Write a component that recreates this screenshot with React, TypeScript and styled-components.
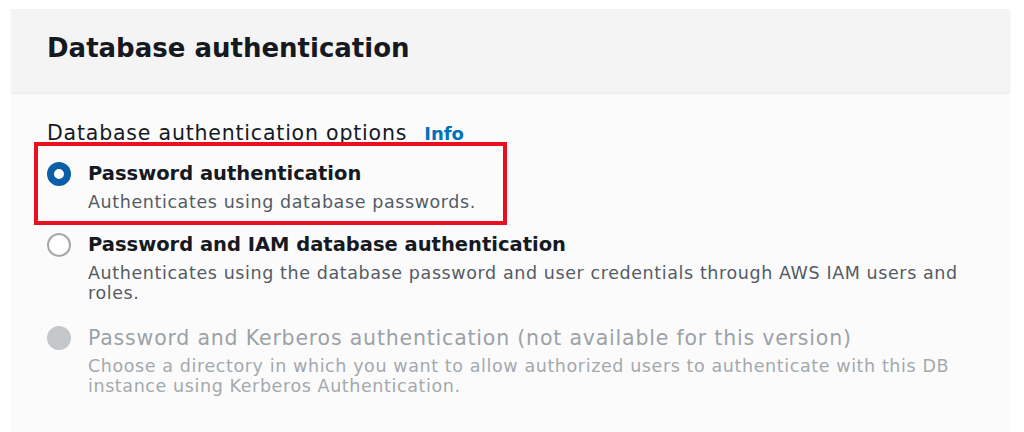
import React from "react";
import styled, { createGlobalStyle } from "styled-components";

const Global = createGlobalStyle`
  html, body { margin: 0; padding: 0; background: #ffffff; }
  body { font-family: "DejaVu Sans", "Liberation Sans", sans-serif; }
`;

const Page = styled.div`
  padding: 9px 14px 0 11px;
  height: 432px;
  box-sizing: border-box;
  overflow: hidden;
`;

const Panel = styled.section`
  background: #fbfbfb;
  height: 100%;
  display: flex;
  flex-direction: column;
`;

const Header = styled.header`
  height: 84px;
  box-sizing: border-box;
  background: #f4f4f4;
  border-bottom: 1px solid #ececec;
  box-shadow: 0 1px 2px rgba(0, 0, 0, 0.05);
  padding: 21px 0 0 36px;
`;

const Title = styled.h2`
  margin: 0;
  font-size: 26px;
  line-height: 36px;
  font-weight: 700;
  color: #16191f;
`;

const Body = styled.div`
  padding: 30px 0 0 36px;
  display: flex;
  flex-direction: column;
`;

const Label = styled.div`
  font-size: 20.5px;
  letter-spacing: 0.8px;
  color: #16191f;
  display: flex;
  align-items: baseline;
  gap: 17px;
  line-height: 20px;
`;

const Info = styled.span`
  font-size: 18px;
  letter-spacing: 0;
  font-weight: 700;
  color: #0073bb;
`;

const Options = styled.div`
  display: flex;
  flex-direction: column;
  gap: 7px;
  margin-left: -13px;
  margin-top: -2px;
`;

const Option = styled.div<{ $highlight?: boolean }>`
  display: flex;
  gap: 17px;
  padding: ${(p) => (p.$highlight ? "15px 27px 8px 9px" : "0 35px 14px 13px")};
  border: ${(p) => (p.$highlight ? "4px solid #e8101e" : "none")};
  align-self: ${(p) => (p.$highlight ? "flex-start" : "stretch")};
`;

const Radio = styled.span<{ $state: "checked" | "unchecked" | "disabled" }>`
  flex: none;
  width: 24px;
  height: 24px;
  border-radius: 50%;
  box-sizing: border-box;
  margin-top: 1px;
  ${(p) =>
    p.$state === "checked"
      ? "border: 7.5px solid #0b5fa8; background: #fff;"
      : p.$state === "unchecked"
      ? "border: 2px solid #a4a8ab; background: #fff;"
      : "background: #c3c7ca;"}
`;

const Texts = styled.div`
  display: flex;
  flex-direction: column;
`;

const OptTitle = styled.div<{ $disabled?: boolean }>`
  font-size: ${(p) => (p.$disabled ? "20.5px" : "19.5px")};
  letter-spacing: ${(p) => (p.$disabled ? "0.8px" : "0")};
  font-weight: ${(p) => (p.$disabled ? 400 : 700)};
  color: ${(p) => (p.$disabled ? "#9ba2a7" : "#16191f")};
  line-height: 26px;
`;

const OptDesc = styled.div<{ $disabled?: boolean }>`
  margin-top: 5px;
  font-size: 17.5px;
  letter-spacing: 0.6px;
  color: ${(p) => (p.$disabled ? "#a3a9ad" : "#545b64")};
  line-height: 20.5px;
`;

const options = [
  {
    state: "checked" as const,
    title: "Password authentication",
    desc: "Authenticates using database passwords.",
    highlight: true,
  },
  {
    state: "unchecked" as const,
    title: "Password and IAM database authentication",
    desc: "Authenticates using the database password and user credentials through AWS IAM users and roles.",
  },
  {
    state: "disabled" as const,
    title: "Password and Kerberos authentication (not available for this version)",
    desc: "Choose a directory in which you want to allow authorized users to authenticate with this DB instance using Kerberos Authentication.",
  },
];

export default function App() {
  return (
    <>
      <Global />
      <Page>
        <Panel>
          <Header>
            <Title>Database authentication</Title>
          </Header>
          <Body>
            <Label>
              Database authentication options <Info>Info</Info>
            </Label>
            <Options>
              {options.map((o) => (
                <Option key={o.title} $highlight={o.highlight}>
                  <Radio $state={o.state} />
                  <Texts>
                    <OptTitle $disabled={o.state === "disabled"}>{o.title}</OptTitle>
                    <OptDesc $disabled={o.state === "disabled"}>{o.desc}</OptDesc>
                  </Texts>
                </Option>
              ))}
            </Options>
          </Body>
        </Panel>
      </Page>
    </>
  );
}
